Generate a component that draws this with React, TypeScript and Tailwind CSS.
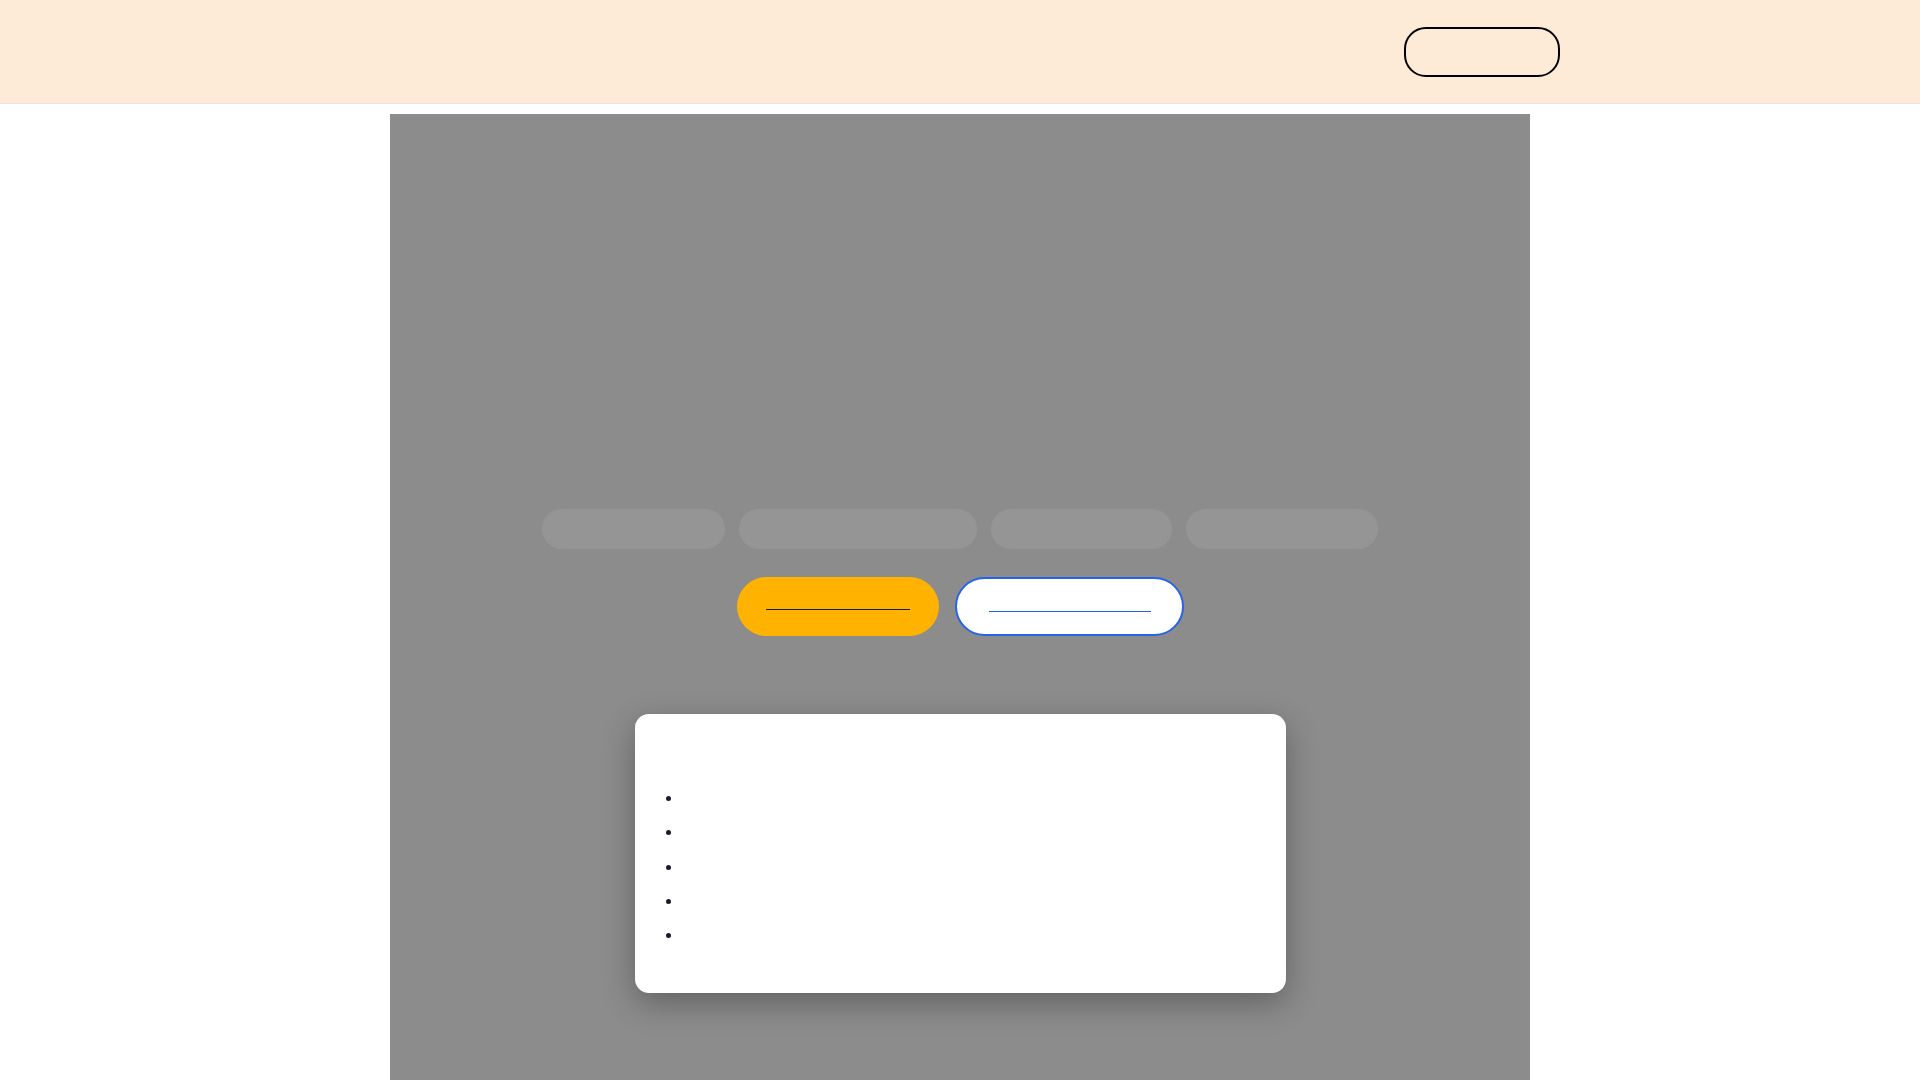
const pills = [
  { label: "Fast delivery", width: "w-[183px]" },
  { label: "Secure payments", width: "w-[238px]" },
  { label: "24/7 support", width: "w-[181px]" },
  { label: "Easy returns", width: "w-[192px]" },
];

const features = [
  "Free shipping on all orders",
  "Cancel anytime",
  "Trusted by thousands of teams",
  "No hidden fees",
  "Money-back guarantee",
];

export default function App() {
  return (
    <div className="min-h-screen bg-white font-['Inter',sans-serif]">
      <header className="h-[104px] border-b border-[#e6e1ea] bg-[#fdebd7]">
        <div className="mx-auto flex h-full max-w-[1200px] items-center justify-end">
          <button className="h-[50px] w-[156px] rounded-[22px] border-2 border-black bg-transparent text-[15px] text-[#fdebd7]">
            Sign in
          </button>
        </div>
      </header>

      <main className="mx-auto mt-[10px] flex min-h-[966px] w-[1140px] flex-col items-center bg-[#8c8c8c] pt-[395px]">
        <div className="flex gap-[14px]">
          {pills.map((p) => (
            <span
              key={p.label}
              className={`flex h-[40px] ${p.width} items-center justify-center rounded-full bg-[#959595] text-sm text-[#959595]`}
            >
              {p.label}
            </span>
          ))}
        </div>

        <div className="mt-[28px] flex gap-[16px]">
          <a
            href="#"
            className="flex h-[59px] w-[202px] items-center rounded-full bg-[#ffb300] pl-[29px]"
          >
            <span className="inline-block w-[144px] -translate-y-[6px] whitespace-nowrap border-b-[1.5px] border-[#1a1a2e] text-[15px] leading-[18px] text-[#ffb300]">
              Get started
            </span>
          </a>
          <a
            href="#"
            className="flex h-[59px] w-[229px] items-center rounded-full border-2 border-[#2563eb] bg-white pl-[32px]"
          >
            <span className="inline-block w-[162px] -translate-y-[4px] whitespace-nowrap border-b-[1.5px] border-[#2563eb] text-[15px] leading-[18px] text-white">
              Learn more
            </span>
          </a>
        </div>

        <div className="mt-[78px] h-[279px] w-[651px] rounded-[14px] bg-white px-[24px] pt-[24px] shadow-[0_10px_32px_rgba(0,0,0,0.3)]">
          <h3 className="h-[42px] text-lg text-white">What's included</h3>
          <ul className="list-disc pl-[24px] text-base text-white marker:text-[#1a1a2e]">
            {features.map((f) => (
              <li key={f} className="h-[34.3px] leading-[34px]">
                {f}
              </li>
            ))}
          </ul>
        </div>
      </main>
    </div>
  );
}
